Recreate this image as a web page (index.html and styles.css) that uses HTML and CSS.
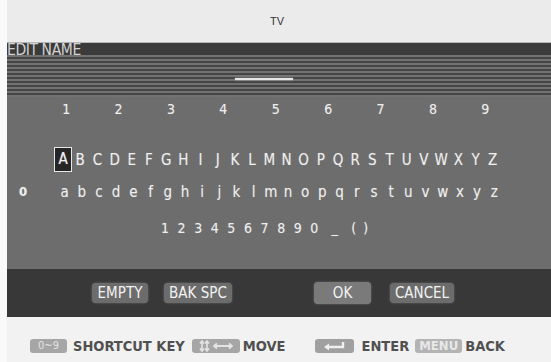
FILE: index.html
```html
<!DOCTYPE html>
<html>
<head>
<meta charset="utf-8">
<link rel="stylesheet" href="styles.css">
</head>
<body>
<div class="screen">
  <div class="header">TV</div>
  <div class="titlebar">EDIT NAME</div>
  <div class="stripes"><div class="cursor-line"></div></div>
  <div class="main">
    <div class="row nums">
      <span>1</span><span>2</span><span>3</span><span>4</span><span>5</span><span>6</span><span>7</span><span>8</span><span>9</span>
    </div>
    <div class="row upper">
      <span class="sel">A</span><span>B</span><span>C</span><span>D</span><span>E</span><span>F</span><span>G</span><span>H</span><span>I</span><span>J</span><span>K</span><span>L</span><span>M</span><span>N</span><span>O</span><span>P</span><span>Q</span><span>R</span><span>S</span><span>T</span><span>U</span><span>V</span><span>W</span><span>X</span><span>Y</span><span>Z</span>
    </div>
    <div class="row lower">
      <span class="zero">0</span><span>a</span><span>b</span><span>c</span><span>d</span><span>e</span><span>f</span><span>g</span><span>h</span><span>i</span><span>j</span><span>k</span><span>l</span><span>m</span><span>n</span><span>o</span><span>p</span><span>q</span><span>r</span><span>s</span><span>t</span><span>u</span><span>v</span><span>w</span><span>x</span><span>y</span><span>z</span>
    </div>
    <div class="row digits">
      <span>1</span><span>2</span><span>3</span><span>4</span><span>5</span><span>6</span><span>7</span><span>8</span><span>9</span><span>0</span><span class="us">_</span><span class="po">(</span><span class="pc">)</span>
    </div>
  </div>
  <div class="buttons">
    <div class="btn b-empty">EMPTY</div>
    <div class="btn b-bak">BAK SPC</div>
    <div class="btn b-ok">OK</div>
    <div class="btn b-cancel">CANCEL</div>
  </div>
  <div class="footer">
    <div class="key k-num">0~9</div>
    <div class="label l-short">SHORTCUT KEY</div>
    <div class="key k-move">
      <svg width="48" height="14" viewBox="0 0 48 14">
        <path d="M10 2 L10 12 M8 4.5 L10 2 L12 4.5 M8 9.5 L10 12 L12 9.5" stroke="#e4e4e4" stroke-width="1.6" fill="none"/>
        <path d="M15 2 L15 12 M13 4.5 L15 2 L17 4.5 M13 9.5 L15 12 L17 9.5" stroke="#e4e4e4" stroke-width="1.6" fill="none"/>
        <path d="M22 7 L40 7 M25 4.5 L22 7 L25 9.5 M37 4.5 L40 7 L37 9.5" stroke="#e4e4e4" stroke-width="1.8" fill="none"/>
      </svg>
    </div>
    <div class="label l-move">MOVE</div>
    <div class="key k-enter">
      <svg width="39" height="14" viewBox="0 0 39 14">
        <path d="M28 3 L28 8 L12 8" stroke="#f0f0f0" stroke-width="2.4" fill="none"/>
        <path d="M9 8 L14 4.5 L14 11.5 Z" fill="#f0f0f0"/>
      </svg>
    </div>
    <div class="label l-enter">ENTER</div>
    <div class="key k-menu">MENU</div>
    <div class="label l-back">BACK</div>
  </div>
</div>
</body>
</html>
```
FILE: styles.css
```css
html, body {
  margin: 0;
  padding: 0;
}
body {
  width: 551px;
  height: 362px;
  background: #fafafa;
  overflow: hidden;
  font-family: "DejaVu Sans Condensed", "Liberation Sans", sans-serif;
}
.screen {
  margin-left: 7px;
  width: 544px;
  height: 362px;
  display: flex;
  flex-direction: column;
}
.header {
  height: 42px;
  line-height: 42px;
  background: #ebebeb;
  border-bottom: 1px solid #b5b5b5;
  text-align: center;
  font-family: "Liberation Sans", sans-serif;
  font-size: 11px;
  color: #333;
  padding-right: 4px;
}
.titlebar {
  height: 12px;
  line-height: 14px;
  background: #3b3b3b;
  color: #d2d2d2;
  font-size: 15.5px;
  letter-spacing: -0.4px;
  white-space: nowrap;
  position: relative;
  z-index: 1;
}
.stripes {
  height: 42px;
  background: repeating-linear-gradient(to bottom, #727272 0, #727272 2px, #444 2px, #444 4px);
  padding-top: 23px;
  padding-left: 228px;
  box-sizing: border-box;
}
.cursor-line {
  width: 58px;
  height: 2px;
  background: #e6e6e6;
  box-shadow: 0 0 2px #bbb;
}
.main {
  height: 172px;
  background: #6d6d6d;
  box-sizing: border-box;
  padding-top: 2px;
  display: flex;
  flex-direction: column;
}
.row {
  display: flex;
  height: 20px;
  line-height: 20px;
  color: #eeeeee;
  font-size: 14px;
  text-shadow: 0 0 1px #999;
}
.row span {
  text-align: center;
  flex: none;
}
.nums {
  padding-left: 33px;
}
.nums span {
  width: 52.4px;
}
.upper {
  margin-top: 31px;
  padding-left: 47.4px;
  font-size: 15px;
}
.upper span {
  width: 17.2px;
}
.upper .sel {
  box-sizing: border-box;
  border: 1px solid #e8e8e8;
  background: #262626;
  height: 25px;
  line-height: 23px;
  width: 18px;
  margin-top: -3px;
  margin-left: -0.4px;
  margin-right: -0.4px;
}
.lower {
  margin-top: 12px;
  font-size: 15px;
}
.lower span {
  width: 17.2px;
}
.lower .zero {
  width: 32px;
  margin-right: 17px;
  font-weight: bold;
  font-size: 13px;
}
.digits {
  margin-top: 16px;
  padding-left: 149.7px;
}
.digits span {
  width: 16.6px;
}
.digits .us { width: 24px; }
.digits .po { width: 14px; }
.digits .pc { width: 10px; }
.buttons {
  height: 48px;
  background: #383838;
  display: flex;
  align-items: center;
  padding-left: 85px;
  box-sizing: border-box;
}
.btn {
  height: 20px;
  line-height: 20px;
  border-radius: 4px;
  background: #6c6c6c;
  color: #f2f2f2;
  text-align: center;
  font-size: 15px;
  box-shadow: 0 0 2px #777;
  flex: none;
}
.b-empty { width: 56px; }
.b-bak { width: 68px; margin-left: 16px; }
.b-ok { width: 57px; margin-left: 82px; background: #7a7a7a; height: 22px; line-height: 22px; }
.b-cancel { width: 64px; margin-left: 19px; }
.footer {
  flex: 1;
  background: #f2f2f2;
  display: flex;
  align-items: center;
  padding-left: 23px;
  padding-top: 12px;
  box-sizing: border-box;
}
.key {
  flex: none;
  height: 14px;
  line-height: 14px;
  border-radius: 3px;
  background: #a6a6a6;
  color: #e2e2e2;
  text-align: center;
  font-size: 11px;
  display: flex;
  align-items: center;
  justify-content: center;
}
.key svg { display: block; }
.label {
  flex: none;
  color: #505050;
  font-size: 14.5px;
  font-weight: bold;
  line-height: 16px;
}
.k-num { width: 37px; }
.l-short { margin-left: 6px; }
.k-move { width: 48px; margin-left: 7px; }
.l-move { margin-left: 3px; }
.k-enter { width: 39px; margin-left: 30px; background: #a0a0a0; }
.l-enter { margin-left: 7px; }
.k-menu { width: 47px; margin-left: 6px; background: #b4b4b4; color: #e8e8e8; font-size: 13px; font-weight: bold; }
.l-back { margin-left: 3px; }
```
